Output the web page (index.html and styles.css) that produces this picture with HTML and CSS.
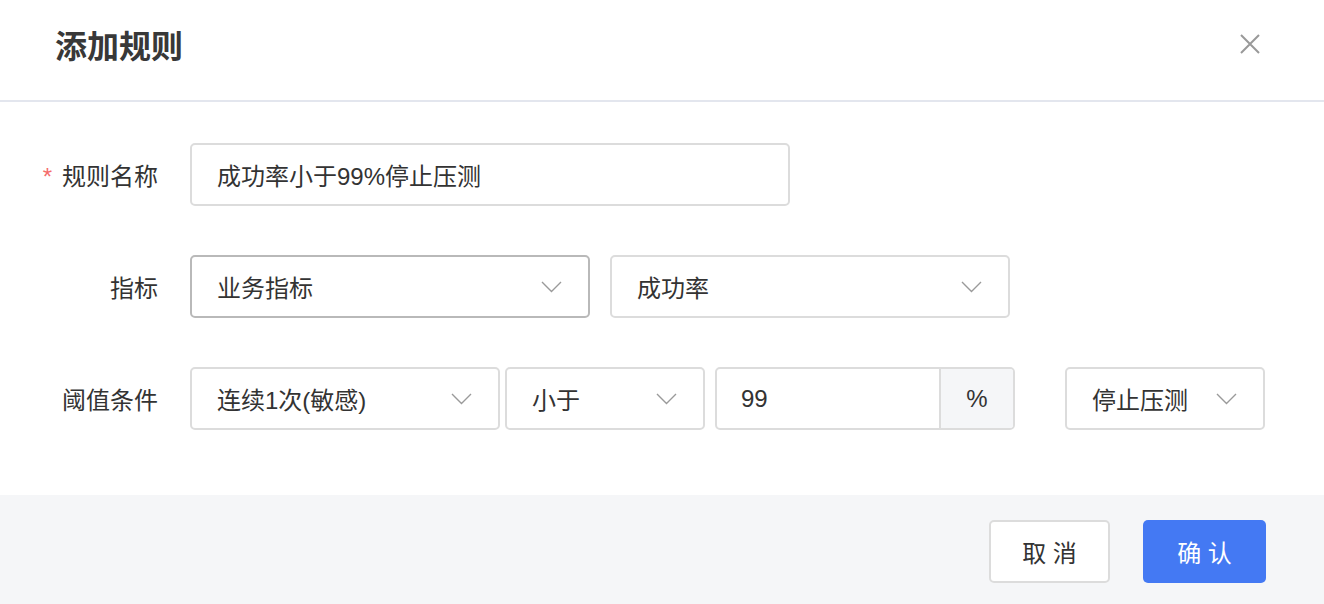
FILE: index.html
```html
<!DOCTYPE html>
<html lang="zh-CN">
<head>
    <meta charset="UTF-8">
    <title>添加规则</title>
    <link rel="stylesheet" href="styles.css">
</head>
<body>
    <div class="modal">
        <div class="modal-header">
            <h2 class="modal-title">添加规则</h2>
            <span class="modal-close">
                <svg width="20" height="20" viewBox="0 0 20 20"><path d="M1 1L19 19M19 1L1 19" stroke="#999" stroke-width="2" fill="none"/></svg>
            </span>
        </div>

        <div class="modal-body">
            <div class="form-row">
                <label class="form-label"><span class="required">*</span>规则名称</label>
                <div class="field field-name">
                    <span class="field-text">成功率小于99%停止压测</span>
                </div>
            </div>

            <div class="form-row">
                <label class="form-label">指标</label>
                <div class="field select select-wide is-hover">
                    <span class="field-text">业务指标</span>
                    <svg class="arrow" width="21" height="12" viewBox="0 0 21 12"><polyline points="1,1 10.5,10.5 20,1" stroke="#9a9a9a" stroke-width="1.4" fill="none"/></svg>
                </div>
                <div class="field select select-wide gap-20">
                    <span class="field-text">成功率</span>
                    <svg class="arrow" width="21" height="12" viewBox="0 0 21 12"><polyline points="1,1 10.5,10.5 20,1" stroke="#9a9a9a" stroke-width="1.4" fill="none"/></svg>
                </div>
            </div>

            <div class="form-row">
                <label class="form-label">阈值条件</label>
                <div class="field select select-times">
                    <span class="field-text">连续1次(敏感)</span>
                    <svg class="arrow" width="21" height="12" viewBox="0 0 21 12"><polyline points="1,1 10.5,10.5 20,1" stroke="#9a9a9a" stroke-width="1.4" fill="none"/></svg>
                </div>
                <div class="field select select-small gap-5">
                    <span class="field-text">小于</span>
                    <svg class="arrow" width="21" height="12" viewBox="0 0 21 12"><polyline points="1,1 10.5,10.5 20,1" stroke="#9a9a9a" stroke-width="1.4" fill="none"/></svg>
                </div>
                <div class="input-group gap-10">
                    <span class="field-text">99</span>
                    <span class="addon">%</span>
                </div>
                <div class="field select select-small gap-50">
                    <span class="field-text">停止压测</span>
                    <svg class="arrow" width="21" height="12" viewBox="0 0 21 12"><polyline points="1,1 10.5,10.5 20,1" stroke="#9a9a9a" stroke-width="1.4" fill="none"/></svg>
                </div>
            </div>
        </div>

        <div class="modal-footer">
            <button class="btn btn-default">取 消</button>
            <button class="btn btn-primary">确 认</button>
        </div>
    </div>
</body>
</html>
```

FILE: styles.css
```css
* {
    box-sizing: border-box;
}

body {
    margin: 0;
    background-color: #ffffff;
    color: #333333;
    font-family: "Liberation Sans", "Noto Sans CJK SC", sans-serif;
}

.modal {
    width: 1324px;
    height: 604px;
    display: flex;
    flex-direction: column;
    background-color: #ffffff;
}

.modal-header {
    height: 102px;
    display: flex;
    align-items: center;
    justify-content: space-between;
    padding: 0 64px 12px 55px;
    border-bottom: 2px solid #e3e6ee;
}

.modal-title {
    margin: 0;
    font-size: 32px;
    font-weight: bold;
    color: #383838;
}

.modal-close {
    display: flex;
    cursor: pointer;
}

.modal-body {
    flex: 1;
    padding-top: 41px;
}

.form-row {
    display: flex;
    align-items: center;
    margin-bottom: 49px;
}

.form-label {
    width: 158px;
    margin-right: 32px;
    text-align: right;
    font-size: 24px;
    color: #333333;
}

.required {
    color: #f56c6c;
    margin-right: 10px;
}

.field {
    height: 63px;
    display: flex;
    align-items: center;
    padding: 0 26px 0 25px;
    border: 2px solid #dcdcdc;
    border-radius: 5px;
    font-size: 24px;
    color: #333333;
    background-color: #ffffff;
}

.field.is-hover {
    border-color: #b9b9b9;
}

.select {
    justify-content: space-between;
}

.field-name {
    width: 600px;
}

.select-wide {
    width: 400px;
}

.select-times {
    width: 310px;
}

.select-small {
    width: 200px;
}

.gap-5 {
    margin-left: 5px;
}

.gap-10 {
    margin-left: 10px;
}

.gap-20 {
    margin-left: 20px;
}

.gap-50 {
    margin-left: 50px;
}

.input-group {
    width: 300px;
    height: 63px;
    display: flex;
    align-items: center;
    border: 2px solid #dcdcdc;
    border-radius: 5px;
    font-size: 24px;
    overflow: hidden;
}

.input-group .field-text {
    flex: 1;
    padding-left: 24px;
}

.input-group .addon {
    width: 74px;
    height: 100%;
    display: flex;
    align-items: center;
    justify-content: center;
    border-left: 2px solid #dcdcdc;
    background-color: #f5f6f8;
}

.modal-footer {
    height: 109px;
    display: flex;
    justify-content: flex-end;
    align-items: flex-start;
    padding: 25px 58px 0 0;
    background-color: #f5f6f8;
}

.btn {
    height: 63px;
    border-radius: 5px;
    font-family: "Liberation Sans", "Noto Sans CJK SC", sans-serif;
    font-size: 24px;
    cursor: pointer;
}

.btn-default {
    width: 121px;
    margin-right: 33px;
    border: 2px solid #dcdcdc;
    background-color: #ffffff;
    color: #333333;
}

.btn-primary {
    width: 123px;
    border: none;
    background-color: #4479f3;
    color: #ffffff;
}
```
